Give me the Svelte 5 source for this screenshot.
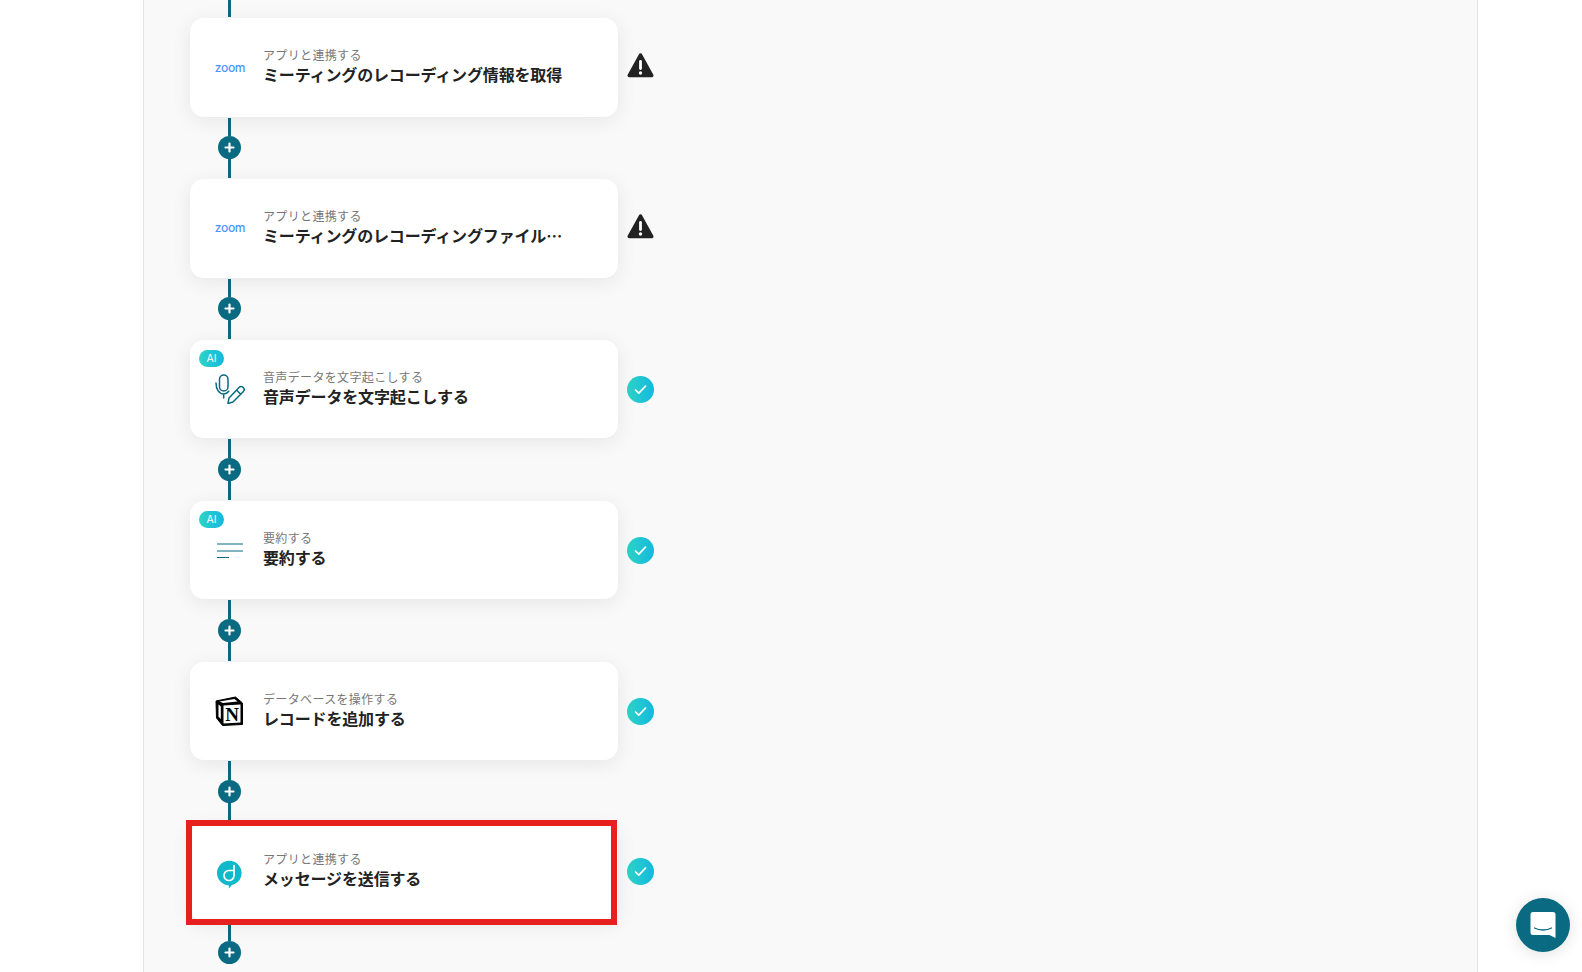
<script>
  const steps = [
    { icon: 'zoom', label: 'アプリと連携する', title: 'ミーティングのレコーディング情報を取得', status: 'warn' },
    { icon: 'zoom', label: 'アプリと連携する', title: 'ミーティングのレコーディングファイルをダウンロード', status: 'warn' },
    { icon: 'mic', ai: true, label: '音声データを文字起こしする', title: '音声データを文字起こしする', status: 'ok' },
    { icon: 'lines', ai: true, label: '要約する', title: '要約する', status: 'ok' },
    { icon: 'notion', label: 'データベースを操作する', title: 'レコードを追加する', status: 'ok' },
    { icon: 'dm', label: 'アプリと連携する', title: 'メッセージを送信する', status: 'ok', marked: true }
  ];
</script>

<div class="page">
  <main class="panel">
    <div class="lead"><span class="line"></span></div>
    {#each steps as step, i}
      <section class="row">
        <article class="card">
          {#if step.ai}<span class="ai">AI</span>{/if}
          <div class="icon">
            {#if step.icon === 'zoom'}
              <span class="zoom">zoom</span>
            {:else if step.icon === 'mic'}
              <svg width="30" height="30" viewBox="0 0 30 30" fill="none" stroke="#0a6a82" stroke-width="1.500" stroke-linecap="round" stroke-linejoin="round">
                <rect x="4.500" y="1" width="8.500" height="16" rx="4.250" />
                <path d="M1 9c0 6.500 3.200 11 7.700 11 2.200 0 3.900-1 5.100-2.700M8.700 20v4" />
                <path d="M13 29.500l1-5.500L24 13.500c1.200-1.200 3-1.200 4.200 0s1.200 3 0 4.200L18 28zM21.500 16l4.200 4.200" />
              </svg>
            {:else if step.icon === 'lines'}
              <svg width="30" height="30" viewBox="0 0 30 30" fill="none" stroke="#0a6a82" stroke-width="1.200">
                <path d="M2 9h26M2 16h26M2 22.500h12" />
              </svg>
            {:else if step.icon === 'notion'}
              <svg width="30" height="30" viewBox="0 0 30 30">
                <path d="M1 5 20.500 1l7 6v21.500L7.500 29.500 1.500 22z" fill="#000" stroke="#000" stroke-width="1" stroke-linejoin="round" />
                <path d="M4.500 5.500 19.500 3 22.500 5.500 8 7z" fill="#fff" />
                <path d="M3.500 8.500 5.800 10.500v12.500l-2.300-2.600z" fill="#fff" />
                <path d="M8.500 9.500 25.500 8.500v18l-17 1z" fill="#fff" />
                <text x="17" y="24.500" text-anchor="middle" class="notion-n">N</text>
              </svg>
            {:else}
              <svg class="dm" width="30" height="30" viewBox="0 0 30 30">
                <path d="M14.300 2.700c6.800 0 12.300 5.500 12.300 12.300 0 6-4.300 11-10 12.100-.5 1.200-1.400 2.400-2.900 3.400.2-1.100.2-2.200 0-3.200C7.300 27 2 21.600 2 15 2 8.200 7.500 2.700 14.300 2.700z" fill="#0fb9c9" />
                <path d="M19 7.500V17.500a5 5 0 1 1-5-5H19" fill="none" stroke="#fff" stroke-width="1.700" stroke-linecap="round" stroke-linejoin="round" />
              </svg>
            {/if}
          </div>
          <div class="text">
            <div class="label">{step.label}</div>
            <div class="title">{step.title}</div>
          </div>
        </article>
        {#if step.marked}<span class="mark"></span>{/if}
        {#if step.status === 'warn'}
          <svg class="status warn" width="27" height="27" viewBox="0 1 27 27">
            <path d="M13.500 2 24.800 22.500H2.200z" fill="#222" stroke="#222" stroke-width="3.500" stroke-linejoin="round" />
            <path d="M13.500 8.500v7" stroke="#fff" stroke-width="2.800" stroke-linecap="round" />
            <circle cx="13.500" cy="20" r="1.700" fill="#fff" />
          </svg>
        {:else}
          <span class="status check">
            <svg width="15" height="15" viewBox="0 0 15 15" fill="none" stroke="#fff" stroke-width="1.700" stroke-linecap="round" stroke-linejoin="round">
              <path d="M2.500 8l3.300 3.200 6.700-7" />
            </svg>
          </span>
        {/if}
      </section>
      <div class="connector" class:last={i === steps.length - 1}>
        <span class="line"></span>
        <span class="plus">
          <svg width="11" height="11" viewBox="0 0 11 11" stroke="#fff" stroke-width="2.200" stroke-linecap="round">
            <path d="M5.500 1.500v8M1.500 5.500h8" />
          </svg>
        </span>
        <span class="line"></span>
      </div>
    {/each}
  </main>

  <button class="chat" aria-label="チャット">
    <svg width="28" height="28" viewBox="0 0 28 28">
      <path d="M4 1h20a2.500 2.500 0 0 1 2.500 2.500V27l-6-3H4a2.500 2.500 0 0 1-2.500-2.500v-18A2.500 2.500 0 0 1 4 1z" fill="#fff" />
      <path d="M5.500 17c5 2.600 12 2.600 17 0" fill="none" stroke="#0a6a82" stroke-width="1.400" stroke-linecap="round" />
    </svg>
  </button>
</div>

<style>
  :global(body) {
    margin: 0;
    background: #fff;
  }

  .page {
    position: relative;
    height: 972px;
    overflow: hidden;
    font-family: "Noto Sans CJK JP", "Noto Sans", sans-serif;
  }

  .panel {
    box-sizing: border-box;
    width: 1335px;
    height: 972px;
    margin-left: 143px;
    padding-left: 46px;
    background: #f9f9f9;
    border-left: 1px solid #e4e4e4;
    border-right: 1px solid #e4e4e4;
    display: flex;
    flex-direction: column;
  }

  .lead {
    width: 23px;
    height: 18.4px;
    margin-left: 28px;
    padding-bottom: 1px;
    box-sizing: border-box;
    display: flex;
    justify-content: center;
    flex-shrink: 0;
  }

  .row {
    position: relative;
    display: flex;
    align-items: center;
    gap: 9px;
    flex-shrink: 0;
  }

  .card {
    position: relative;
    box-sizing: border-box;
    width: 428px;
    height: 98.3px;
    padding: 0 25px;
    background: #fff;
    border-radius: 14px;
    box-shadow: 0 4px 20px rgba(0, 0, 0, 0.08);
    display: flex;
    align-items: center;
    gap: 18px;
  }

  .ai {
    position: absolute;
    left: 9px;
    top: 10px;
    width: 25px;
    height: 17px;
    border-radius: 9px;
    background: linear-gradient(90deg, #2dd4c4, #14b8e0);
    color: #fff;
    font-family: "Inter", sans-serif;
    font-size: 10.5px;
    line-height: 17px;
    text-align: center;
  }

  .icon {
    width: 30px;
    height: 30px;
    flex-shrink: 0;
    display: flex;
    align-items: center;
    justify-content: center;
  }

  .dm {
    overflow: visible;
    transform: translateY(1px);
  }

  .zoom {
    font-family: "Inter", sans-serif;
    font-size: 12px;
    font-weight: 500;
    line-height: 16px;
    color: #4b96ff;
    letter-spacing: -0.3px;
  }

  .notion-n {
    font-family: "Liberation Serif", serif;
    font-size: 19px;
    font-weight: 700;
    fill: #000;
  }

  .text {
    width: 302px;
    padding-bottom: 1px;
  }

  .label {
    font-size: 12px;
    line-height: 14px;
    color: #777;
    letter-spacing: 0.35px;
    white-space: nowrap;
  }

  .title {
    font-size: 16px;
    line-height: 24px;
    font-weight: 700;
    color: #222;
    letter-spacing: -0.15px;
    white-space: nowrap;
    overflow: hidden;
    text-overflow: ellipsis;
  }

  .mark {
    position: absolute;
    left: -4px;
    top: -3px;
    box-sizing: border-box;
    width: 431px;
    height: 105px;
    border: 6px solid #e81f1f;
    pointer-events: none;
  }

  .status {
    width: 27px;
    height: 27px;
    flex-shrink: 0;
  }

  .warn {
    overflow: visible;
  }

  .check {
    border-radius: 50%;
    background: linear-gradient(90deg, #2dd4c4, #14b8e0);
    display: flex;
    align-items: center;
    justify-content: center;
  }

  .connector {
    box-sizing: border-box;
    width: 23px;
    height: 62.6px;
    margin-left: 28px;
    padding: 1px 0;
    display: flex;
    flex-direction: column;
    align-items: center;
    flex-shrink: 0;
  }

  .connector .line {
    flex: 1;
  }

  .line {
    width: 3px;
    background: #0a6a82;
  }

  .connector.last .line:last-child {
    background: transparent;
  }

  .plus {
    width: 23px;
    height: 23px;
    border-radius: 50%;
    background: #0a6a82;
    display: flex;
    align-items: center;
    justify-content: center;
    flex-shrink: 0;
  }

  .chat {
    position: absolute;
    left: 1516px;
    top: 898px;
    width: 54px;
    height: 54px;
    padding: 0;
    border: 0;
    border-radius: 50%;
    background: #0a6a82;
    box-shadow: 0 2px 16px rgba(0, 0, 0, 0.12);
    display: flex;
    align-items: center;
    justify-content: center;
  }
</style>
